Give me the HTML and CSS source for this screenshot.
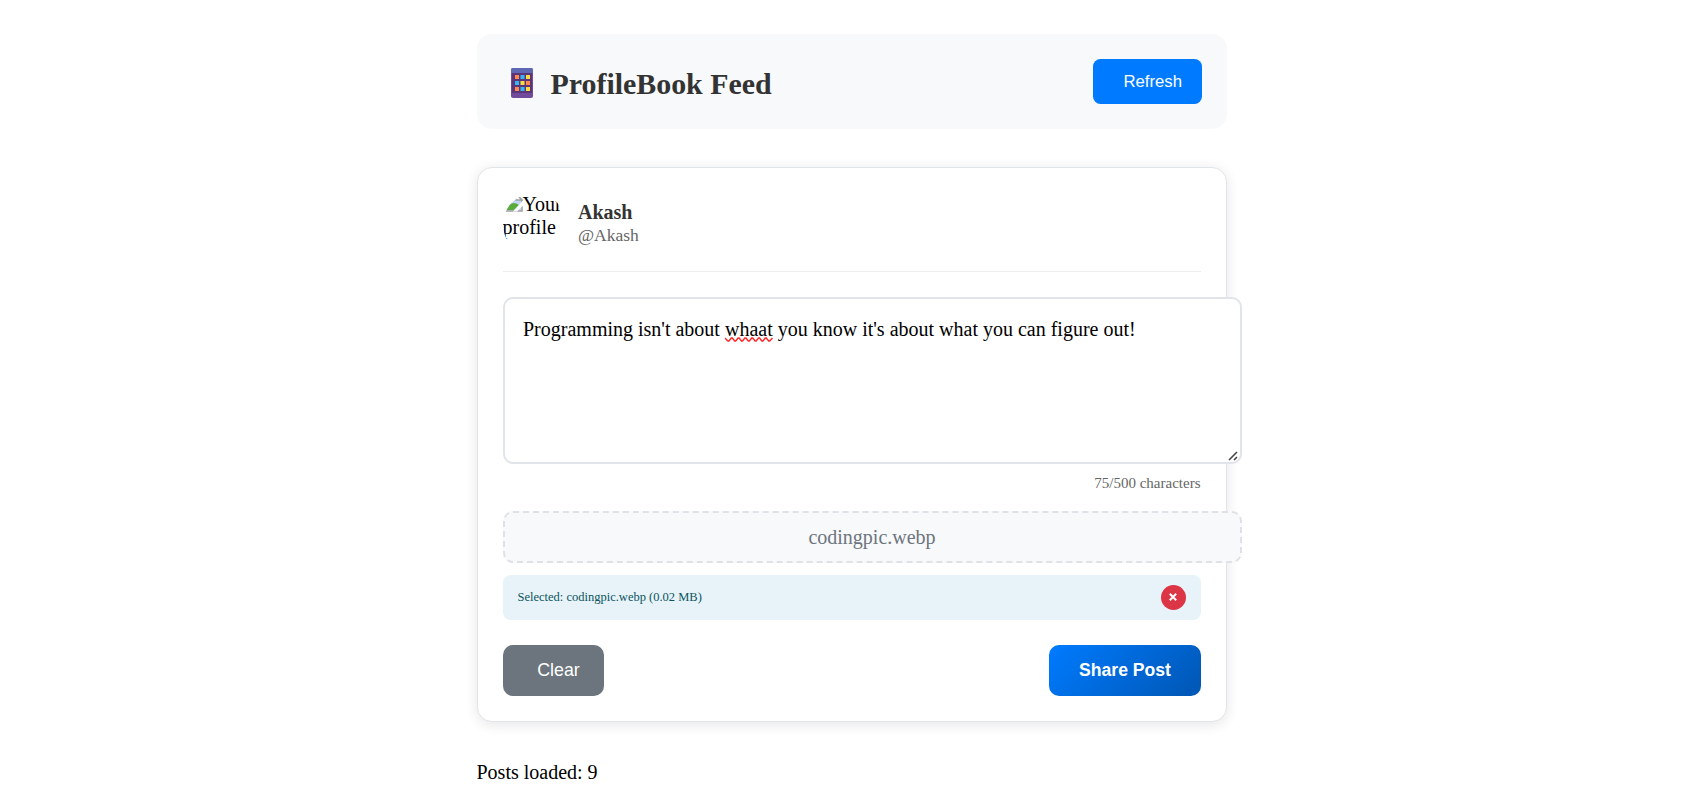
FILE: index.html
```html
<!DOCTYPE html>
<html lang="en">
<head>
<meta charset="utf-8">
<title>ProfileBook Feed</title>
<link rel="stylesheet" href="styles.css">
</head>
<body>
<main class="feed">
  <header class="feed-header">
    <h2 class="feed-title">
      <svg class="feed-icon" width="22" height="30" viewBox="0 0 22 30" aria-hidden="true">
        <rect x="0" y="0" width="22" height="30" rx="2" fill="#714a9b"/>
        <rect x="1" y="4" width="20" height="21" fill="#5b3577"/>
        <path d="M2 0h18a2 2 0 0 1 2 2v3H0V2a2 2 0 0 1 2-2z" fill="#5f68b5"/>
        <g fill="#ff8a4c"><rect x="4" y="7" width="4" height="4"/><rect x="15" y="13" width="4" height="4"/><rect x="4" y="19" width="4" height="4"/></g>
        <g fill="#33b6f5"><rect x="9.500" y="7" width="4" height="4"/><rect x="4" y="13" width="4" height="4"/><rect x="9.500" y="19" width="4" height="4"/></g>
        <g fill="#fddb45"><rect x="15" y="7" width="4" height="4"/><rect x="9.500" y="13" width="4" height="4"/><rect x="15" y="19" width="4" height="4"/></g>
      </svg>
      <span>ProfileBook Feed</span>
    </h2>
    <button class="btn btn-refresh">Refresh</button>
  </header>

  <section class="card">
    <div class="author">
      <div class="avatar">
        <svg class="avatar-icon" width="20" height="20" viewBox="0 0 20 20" aria-hidden="true">
          <path d="M1 1h12l6 6v11H1z" fill="#c5d5f4" stroke="#a0a0a0" stroke-width="1.500"/>
          <path d="M13 1v6h6z" fill="#fff" stroke="#a0a0a0" stroke-width="1.500"/>
          <path d="M2 17q6-11 14-5l-5 5z" fill="#5aab3c"/>
          <path d="M20 7.500L10 18.500h4l6-6z" fill="#fff"/>
        </svg>Your profile
      </div>
      <div class="author-text">
        <div class="author-name">Akash</div>
        <div class="author-handle">@Akash</div>
      </div>
    </div>

    <div class="editor">Programming isn't about <span class="misspelt">whaat<svg class="squiggle" width="49" height="6" viewBox="0 0 49 6" aria-hidden="true"><path d="M0 1L2.900 4H3.900L6.300 1H7.300L9.700 4H10.700L13.100 1H14.100L16.500 4H17.500L19.900 1H20.900L23.300 4H24.300L26.700 1H27.700L30.100 4H31.100L33.500 1H34.500L36.900 4H37.900L40.300 1H41.300L43.700 4H44.700L47.500 1"/></svg></span> you know it's about what you can figure out!<svg class="grip" width="10" height="10" viewBox="0 0 10 10" aria-hidden="true"><path d="M1 9L9 1M6 9L9 6"/></svg></div>
    <div class="counter">75/500 characters</div>

    <div class="dropzone">codingpic.webp</div>
    <div class="selected">
      <span>Selected: codingpic.webp (0.02 MB)</span>
      <button class="remove" aria-label="Remove file"><svg width="8" height="8" viewBox="0 0 8 8"><path d="M.8 .8L7.200 7.200M7.200 .8L.8 7.200"/></svg></button>
    </div>

    <div class="actions">
      <button class="btn btn-clear">Clear</button>
      <button class="btn btn-share">Share Post</button>
    </div>
  </section>
  <p class="status">Posts loaded: 9</p>
</main>
</body>
</html>
```
FILE: styles.css
```css
* { box-sizing: border-box; }
body {
  margin: 0;
  height: 785px;
  overflow: hidden;
  background: #fff;
  color: #000;
  font: 20px/23px "Liberation Serif", "Times New Roman", serif;
}
.feed { width: 750px; margin: 0 0 0 476.500px; padding-top: 34px; }
.feed-header {
  display: flex;
  justify-content: space-between;
  align-items: flex-start;
  height: 95px;
  padding: 25px;
  border-radius: 15px;
  background: #f8f9fb;
}
.feed-title {
  display: flex;
  align-items: center;
  gap: 18px;
  margin: 8px 0 0 9px;
  color: #333;
  font-size: 29.900px;
  line-height: 34px;
}
.feed-icon { position: relative; top: -1px; }
.btn {
  border: 0;
  color: #fff;
  font-family: "Liberation Sans", Arial, sans-serif;
  white-space: nowrap;
}
.btn-refresh {
  width: 109px;
  height: 45px;
  padding: 0 20px 0 31px;
  border-radius: 7.500px;
  background: #007bff;
  font-size: 16.700px;
}
.card {
  height: 555px;
  margin-top: 38px;
  padding: 25px;
  border: 1px solid #e1e5e9;
  border-radius: 15px;
  background: #fff;
  box-shadow: 0 2.500px 12.500px rgba(0, 0, 0, 0.1);
}
.author {
  display: flex;
  align-items: center;
  gap: 12.500px;
  height: 79px;
  padding-bottom: 16px;
  border-bottom: 1px solid #eee;
}
.avatar { width: 63px; height: 63px; border-radius: 50%; overflow: hidden; }
.avatar-icon { vertical-align: -2px; }
.author-name { color: #333; font-weight: bold; }
.author-handle { color: #666; font-size: 17.500px; line-height: 23px; }
.editor {
  position: relative;
  width: 739px;
  height: 167px;
  margin-top: 25px;
  padding: 16px 18.500px;
  border: 2px solid #e1e5e9;
  border-radius: 10px;
  background: #fff;
  line-height: 29px;
}
.misspelt { position: relative; }
.squiggle { position: absolute; left: 0; top: 19px; fill: none; stroke: #f22; stroke-width: 1.300; }
.grip { position: absolute; right: 2px; bottom: 1px; fill: none; stroke: #444; stroke-width: 1.600; }
.counter { margin-top: 9px; color: #666; font-size: 15px; line-height: 20px; text-align: right; }
.dropzone {
  position: relative;
  width: 739px;
  height: 52px;
  margin-top: 18px;
  border: 2px dashed #dee2e6;
  border-radius: 10px;
  background: #f8f9fb;
  color: #6c757d;
  line-height: 48px;
  text-align: center;
}
.selected {
  display: flex;
  align-items: center;
  justify-content: space-between;
  height: 45px;
  margin-top: 12px;
  padding: 0 15px;
  border-radius: 7.500px;
  background: #e7f3f8;
  color: #0c5460;
  font-size: 12.500px;
  line-height: 16px;
}
.selected span { padding-bottom: 1px; }
.remove {
  display: grid;
  place-items: center;
  width: 25px;
  height: 25px;
  padding: 0 1px 1px 0;
  border: 0;
  border-radius: 50%;
  background: #dc3545;
}
.remove svg { fill: none; stroke: #fff; stroke-width: 2; }
.actions { display: flex; justify-content: space-between; margin-top: 25px; }
.btn-clear { width: 101px; height: 51px; padding: 0 22px 0 33px; border-radius: 10px; background: #6c757d; font-size: 17.800px; }
.btn-share { width: 152px; height: 51px; padding: 0 0 0 1px; border-radius: 10px; background: linear-gradient(135deg, #007bff, #0056b3); font-size: 17.600px; font-weight: bold; }
.status { margin: 38.500px 0 0; }
```
